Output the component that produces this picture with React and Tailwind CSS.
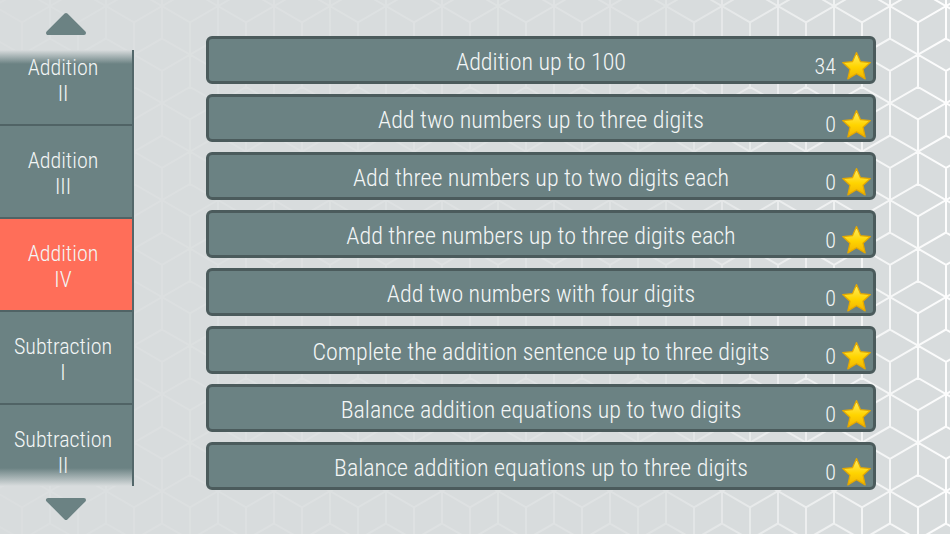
import React from 'react';

const S = 32.33;
const W = 28;

// one cube (hexagon + inner Y) centred on cx, cy
const cube = (cx, cy) =>
    `M${cx},${cy - S} L${cx + W},${cy - S / 2} L${cx + W},${cy + S / 2} L${cx},${cy + S} L${cx - W},${cy + S / 2} L${cx - W},${cy - S / 2} Z ` +
    `M${cx},${cy} L${cx},${cy + S} M${cx},${cy} L${cx - W},${cy - S / 2} M${cx},${cy} L${cx + W},${cy - S / 2} `;

const cubePath = [
    [28, S],
    [0, 2.5 * S],
    [56, 2.5 * S],
    [0, -0.5 * S],
    [56, -0.5 * S],
    [28, 4 * S],
].map(([x, y]) => cube(x, y)).join('');

const lessons = [
    { title: 'Addition up to 100', score: 34 },
    { title: 'Add two numbers up to three digits', score: 0 },
    { title: 'Add three numbers up to two digits each', score: 0 },
    { title: 'Add three numbers up to three digits each', score: 0 },
    { title: 'Add two numbers with four digits', score: 0 },
    { title: 'Complete the addition sentence up to three digits', score: 0 },
    { title: 'Balance addition equations up to two digits', score: 0 },
    { title: 'Balance addition equations up to three digits', score: 0 },
];

const levels = [
    { name: 'Addition', num: 'II' },
    { name: 'Addition', num: 'III' },
    { name: 'Addition', num: 'IV', active: true },
    { name: 'Subtraction', num: 'I' },
    { name: 'Subtraction', num: 'II' },
];

const Star = () => (
    <svg viewBox="0 0 32 32" className="w-[33px] h-[33px]">
        <defs>
            <linearGradient id="starFill" x1="0" y1="0" x2="0" y2="1">
                <stop offset="0" stopColor="#fff06a" />
                <stop offset="0.55" stopColor="#ffd400" />
                <stop offset="1" stopColor="#f2b300" />
            </linearGradient>
        </defs>
        <path
            d="M16 2.5 L19.9 11.3 L29.4 12.2 L22.3 18.6 L24.4 28 L16 23.1 L7.6 28 L9.7 18.6 L2.6 12.2 L12.1 11.3 Z"
            fill="url(#starFill)"
            stroke="#e5a900"
            strokeWidth="1.2"
            strokeLinejoin="round"
        />
    </svg>
);

const Arrow = ({ down }) => (
    <svg viewBox="0 0 44 24" className="w-[44px] h-[24px]">
        <path
            d={down ? 'M4 3 L40 3 L22 21 Z' : 'M4 21 L40 21 L22 3 Z'}
            fill="#6b8283"
            stroke="#6b8283"
            strokeWidth="4"
            strokeLinejoin="round"
        />
    </svg>
);

export default function App() {
    return (
        <div className="relative w-[950px] h-[534px] overflow-hidden bg-[#d8dcdd] text-[#f3f6f6] font-['Roboto',sans-serif] font-[350] font-stretch-condensed">
            {/* cube pattern background */}
            <svg className="absolute inset-0 w-full h-full" width="950" height="534">
                <defs>
                    <pattern id="cubes" width="56" height={3 * S} patternUnits="userSpaceOnUse" x="-6" y="-10">
                        <path d={cubePath} fill="none" stroke="#ffffff" strokeWidth="2" />
                    </pattern>
                    <linearGradient id="fade" x1="0" y1="0" x2="1" y2="0">
                        <stop offset="0" stopColor="#fff" stopOpacity="0.08" />
                        <stop offset="0.7" stopColor="#fff" stopOpacity="0.2" />
                        <stop offset="0.88" stopColor="#fff" stopOpacity="0.6" />
                        <stop offset="1" stopColor="#fff" stopOpacity="0.95" />
                    </linearGradient>
                    <mask id="fadeMask">
                        <rect width="950" height="534" fill="url(#fade)" />
                    </mask>
                </defs>
                <rect width="950" height="534" fill="url(#cubes)" mask="url(#fadeMask)" />
            </svg>

            <div className="relative flex h-full">
                {/* Level sidebar */}
                <aside className="w-[134px] flex flex-col items-stretch">
                    <div className="h-[50px] flex items-start justify-center pt-[12px] pr-[2px]">
                        <Arrow />
                    </div>
                    <div className="relative h-[436px] overflow-hidden border-r-2 border-[#53676a]">
                        <div className="-mt-[17px] flex flex-col">
                            {levels.map((lvl, i) => (
                                <div
                                    key={i}
                                    className={`h-[93px] flex flex-col items-center justify-center pt-[5px] pr-[6px] text-[22px] leading-[26px] border-b-2 border-[#506365] ${lvl.active ? 'bg-[#ff6e59]' : 'bg-[#6b8283]'}`}
                                >
                                    <span>{lvl.name}</span>
                                    <span>{lvl.num}</span>
                                </div>
                            ))}
                        </div>
                        <div className="absolute top-0 left-0 right-0 h-[14px] bg-gradient-to-b from-[#d8dcdd] to-transparent" />
                        <div className="absolute bottom-0 left-0 right-0 h-[18px] bg-gradient-to-t from-[#d8dcdd] to-transparent" />
                    </div>
                    <div className="flex-1 flex items-start justify-center pt-[11px] pr-[2px]">
                        <Arrow down />
                    </div>
                </aside>

                {/* Lesson list */}
                <main className="flex flex-col gap-[10px] pt-[36px] pl-[72px]">
                    {lessons.map((l, i) => (
                        <div
                            key={i}
                            className="relative w-[670px] h-[48px] rounded-[6px] border-[3px] border-[#4b5b5c] bg-[#6b8283] flex items-center justify-center"
                        >
                            <span className="text-[24px] leading-none mt-[4px]">{l.title}</span>
                            <div className="absolute right-[0px] bottom-[-2px] flex items-end gap-[4px]">
                                <span className="text-[22px] leading-none mb-[5px]">{l.score}</span>
                                <Star />
                            </div>
                        </div>
                    ))}
                </main>
            </div>
        </div>
    );
}
